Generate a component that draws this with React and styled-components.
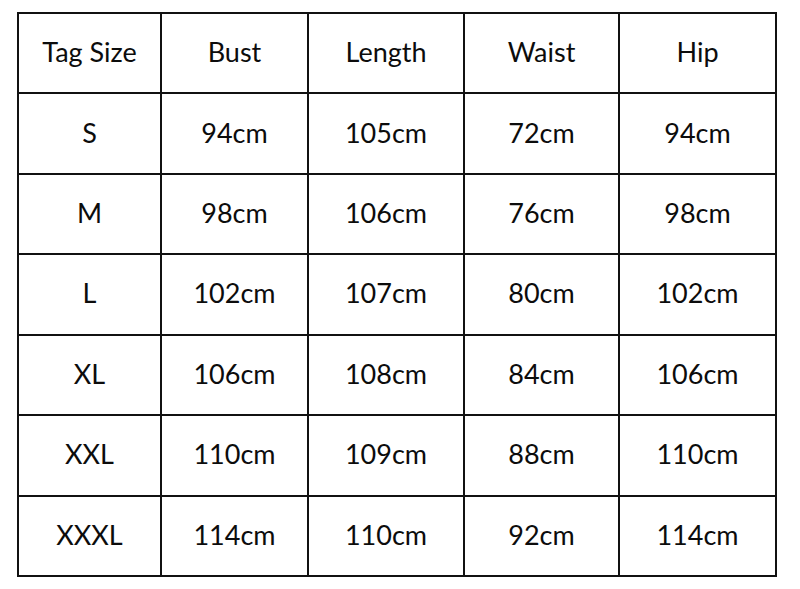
import React from "react";
import styled, { createGlobalStyle } from "styled-components";

const GlobalStyle = createGlobalStyle`
    html, body {
        margin: 0;
        padding: 0;
        background: #ffffff;
    }
`;

const Page = styled.div`
    width: 800px;
    height: 589px;
    padding: 12px 0 0 17px;
    box-sizing: border-box;
    background: #ffffff;
`;

const Grid = styled.div`
    display: grid;
    grid-template-columns: 141px 145px 154px 153px 155px;
    grid-template-rows: repeat(7, 1fr);
    gap: 2px;
    padding: 2px;
    width: 760px;
    height: 565px;
    box-sizing: border-box;
    background: #111111;
`;

const Cell = styled.div`
    background: #ffffff;
    display: flex;
    align-items: center;
    justify-content: center;
    font-family: Lato, "Open Sans", sans-serif;
    font-size: 27px;
    color: #0c0c0c;
    padding-bottom: 3px;
`;

const headers = ["Tag Size", "Bust", "Length", "Waist", "Hip"];

const rows = [
    ["S", "94cm", "105cm", "72cm", "94cm"],
    ["M", "98cm", "106cm", "76cm", "98cm"],
    ["L", "102cm", "107cm", "80cm", "102cm"],
    ["XL", "106cm", "108cm", "84cm", "106cm"],
    ["XXL", "110cm", "109cm", "88cm", "110cm"],
    ["XXXL", "114cm", "110cm", "92cm", "114cm"],
];

export default function App() {
    return (
        <>
            <GlobalStyle />
            <Page>
                <Grid>
                    {headers.map((h) => (
                        <Cell key={h}>{h}</Cell>
                    ))}
                    {rows.map((row) =>
                        row.map((value, i) => (
                            <Cell key={row[0] + i}>{value}</Cell>
                        ))
                    )}
                </Grid>
            </Page>
        </>
    );
}
